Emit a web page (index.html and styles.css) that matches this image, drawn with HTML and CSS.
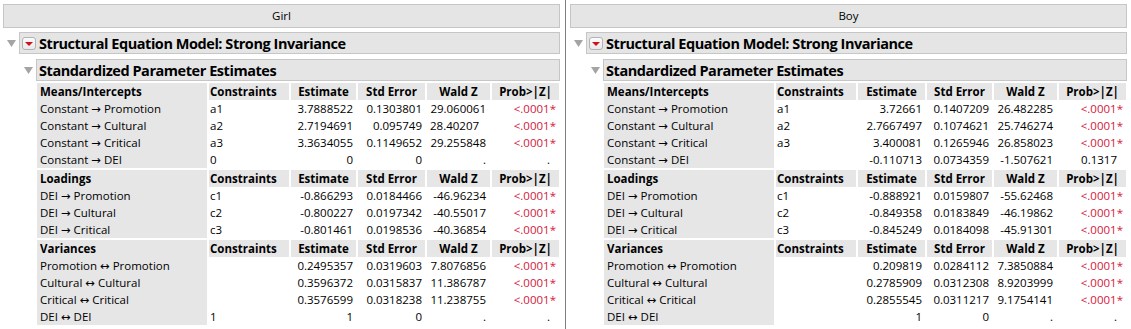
FILE: index.html
```html
<!DOCTYPE html>
<html>
<head>
<meta charset="utf-8">
<link rel="stylesheet" href="styles.css">
</head>
<body>
<div class="page">
  <section class="panel girl">
    <div class="group-title">Girl</div>
    <div class="outline lvl1">
      <span class="disclose"><svg width="9" height="7" viewBox="0 0 9 7"><path d="M0 0H9L4.5 7Z" fill="#a4a4a4"/></svg></span>
      <div class="ohead">
        <span class="menu-btn"><svg width="12" height="11" viewBox="0 0 12 11"><path d="M2 4H10L6 8Z" fill="#d0101e"/></svg></span>
        <span class="otitle">Structural Equation Model: Strong Invariance</span>
      </div>
    </div>
    <div class="outline lvl2">
      <span class="disclose"><svg width="9" height="7" viewBox="0 0 9 7"><path d="M0 0H9L4.5 7Z" fill="#a4a4a4"/></svg></span>
      <div class="ohead"><span class="otitle">Standardized Parameter Estimates</span></div>
    </div>
    <div class="est">
      <div class="grp">
        <div class="c h lab">Means/Intercepts</div><div class="c h con">Constraints</div><div class="c h ctr">Estimate</div><div class="c h ctr">Std Error</div><div class="c h ctr">Wald Z</div><div class="c h ctr">Prob&gt;|Z|</div>
        <div class="c lab">Constant → Promotion</div><div class="c con">a1</div><div class="c num">3.7888522</div><div class="c num">0.1303801</div><div class="c num wz">29.060061</div><div class="c num p">&lt;.0001*</div>
        <div class="c lab">Constant → Cultural</div><div class="c con">a2</div><div class="c num">2.7194691</div><div class="c num">0.095749</div><div class="c num wz d1">28.40207</div><div class="c num p">&lt;.0001*</div>
        <div class="c lab">Constant → Critical</div><div class="c con">a3</div><div class="c num">3.3634055</div><div class="c num">0.1149652</div><div class="c num wz">29.255848</div><div class="c num p">&lt;.0001*</div>
        <div class="c lab">Constant → DEI</div><div class="c con">0</div><div class="c num">0</div><div class="c num">0</div><div class="c num wz">.</div><div class="c num ns">.</div>
      </div>
      <div class="grp">
        <div class="c h lab">Loadings</div><div class="c h con">Constraints</div><div class="c h ctr">Estimate</div><div class="c h ctr">Std Error</div><div class="c h ctr">Wald Z</div><div class="c h ctr">Prob&gt;|Z|</div>
        <div class="c lab">DEI → Promotion</div><div class="c con">c1</div><div class="c num">-0.866293</div><div class="c num">0.0184466</div><div class="c num wz">-46.96234</div><div class="c num p">&lt;.0001*</div>
        <div class="c lab">DEI → Cultural</div><div class="c con">c2</div><div class="c num">-0.800227</div><div class="c num">0.0197342</div><div class="c num wz">-40.55017</div><div class="c num p">&lt;.0001*</div>
        <div class="c lab">DEI → Critical</div><div class="c con">c3</div><div class="c num">-0.801461</div><div class="c num">0.0198536</div><div class="c num wz">-40.36854</div><div class="c num p">&lt;.0001*</div>
      </div>
      <div class="grp">
        <div class="c h lab">Variances</div><div class="c h con">Constraints</div><div class="c h ctr">Estimate</div><div class="c h ctr">Std Error</div><div class="c h ctr">Wald Z</div><div class="c h ctr">Prob&gt;|Z|</div>
        <div class="c lab">Promotion ↔ Promotion</div><div class="c con"></div><div class="c num">0.2495357</div><div class="c num">0.0319603</div><div class="c num wz">7.8076856</div><div class="c num p">&lt;.0001*</div>
        <div class="c lab">Cultural ↔ Cultural</div><div class="c con"></div><div class="c num">0.3596372</div><div class="c num">0.0315837</div><div class="c num wz">11.386787</div><div class="c num p">&lt;.0001*</div>
        <div class="c lab">Critical ↔ Critical</div><div class="c con"></div><div class="c num">0.3576599</div><div class="c num">0.0318238</div><div class="c num wz">11.238755</div><div class="c num p">&lt;.0001*</div>
        <div class="c lab">DEI ↔ DEI</div><div class="c con">1</div><div class="c num">1</div><div class="c num">0</div><div class="c num wz">.</div><div class="c num ns">.</div>
      </div>
    </div>
  </section>
  <div class="divider"></div>
  <section class="panel boy">
    <div class="group-title">Boy</div>
    <div class="outline lvl1">
      <span class="disclose"><svg width="9" height="7" viewBox="0 0 9 7"><path d="M0 0H9L4.5 7Z" fill="#a4a4a4"/></svg></span>
      <div class="ohead">
        <span class="menu-btn"><svg width="12" height="11" viewBox="0 0 12 11"><path d="M2 4H10L6 8Z" fill="#d0101e"/></svg></span>
        <span class="otitle">Structural Equation Model: Strong Invariance</span>
      </div>
    </div>
    <div class="outline lvl2">
      <span class="disclose"><svg width="9" height="7" viewBox="0 0 9 7"><path d="M0 0H9L4.5 7Z" fill="#a4a4a4"/></svg></span>
      <div class="ohead"><span class="otitle">Standardized Parameter Estimates</span></div>
    </div>
    <div class="est">
      <div class="grp">
        <div class="c h lab">Means/Intercepts</div><div class="c h con">Constraints</div><div class="c h ctr">Estimate</div><div class="c h ctr">Std Error</div><div class="c h ctr">Wald Z</div><div class="c h ctr">Prob&gt;|Z|</div>
        <div class="c lab">Constant → Promotion</div><div class="c con">a1</div><div class="c num">3.72661</div><div class="c num">0.1407209</div><div class="c num wz">26.482285</div><div class="c num p">&lt;.0001*</div>
        <div class="c lab">Constant → Cultural</div><div class="c con">a2</div><div class="c num">2.7667497</div><div class="c num">0.1074621</div><div class="c num wz">25.746274</div><div class="c num p">&lt;.0001*</div>
        <div class="c lab">Constant → Critical</div><div class="c con">a3</div><div class="c num">3.400081</div><div class="c num">0.1265946</div><div class="c num wz">26.858023</div><div class="c num p">&lt;.0001*</div>
        <div class="c lab">Constant → DEI</div><div class="c con"></div><div class="c num">-0.110713</div><div class="c num">0.0734359</div><div class="c num wz">-1.507621</div><div class="c num ns">0.1317</div>
      </div>
      <div class="grp">
        <div class="c h lab">Loadings</div><div class="c h con">Constraints</div><div class="c h ctr">Estimate</div><div class="c h ctr">Std Error</div><div class="c h ctr">Wald Z</div><div class="c h ctr">Prob&gt;|Z|</div>
        <div class="c lab">DEI → Promotion</div><div class="c con">c1</div><div class="c num">-0.888921</div><div class="c num">0.0159807</div><div class="c num wz">-55.62468</div><div class="c num p">&lt;.0001*</div>
        <div class="c lab">DEI → Cultural</div><div class="c con">c2</div><div class="c num">-0.849358</div><div class="c num">0.0183849</div><div class="c num wz">-46.19862</div><div class="c num p">&lt;.0001*</div>
        <div class="c lab">DEI → Critical</div><div class="c con">c3</div><div class="c num">-0.845249</div><div class="c num">0.0184098</div><div class="c num wz">-45.91301</div><div class="c num p">&lt;.0001*</div>
      </div>
      <div class="grp">
        <div class="c h lab">Variances</div><div class="c h con">Constraints</div><div class="c h ctr">Estimate</div><div class="c h ctr">Std Error</div><div class="c h ctr">Wald Z</div><div class="c h ctr">Prob&gt;|Z|</div>
        <div class="c lab">Promotion ↔ Promotion</div><div class="c con"></div><div class="c num">0.209819</div><div class="c num">0.0284112</div><div class="c num wz">7.3850884</div><div class="c num p">&lt;.0001*</div>
        <div class="c lab">Cultural ↔ Cultural</div><div class="c con"></div><div class="c num">0.2785909</div><div class="c num">0.0312308</div><div class="c num wz">8.9203999</div><div class="c num p">&lt;.0001*</div>
        <div class="c lab">Critical ↔ Critical</div><div class="c con"></div><div class="c num">0.2855545</div><div class="c num">0.0311217</div><div class="c num wz">9.1754141</div><div class="c num p">&lt;.0001*</div>
        <div class="c lab">DEI ↔ DEI</div><div class="c con"></div><div class="c num">1</div><div class="c num">0</div><div class="c num wz">.</div><div class="c num ns">.</div>
      </div>
    </div>
  </section>
</div>
</body>
</html>
```
FILE: styles.css
```css
* { box-sizing: border-box; }
html, body { margin: 0; padding: 0; background: #fff; }
body {
  font-family: "Open Sans", "Noto Sans", "DejaVu Sans", sans-serif;
  font-size: 11.5px;
  color: #000;
}
.page {
  display: flex;
  padding-left: 3px;
  height: 329px;
  overflow: hidden;
}
.panel {
  width: 557px;
  flex: none;
  padding-top: 4px;
}
.divider {
  width: 1px;
  margin: 0 4px 0 5px;
  background: #7d7d7d;
  flex: none;
}
.group-title {
  height: 24px;
  border: 1px solid #c6c6c6;
  background: #e5e5e5;
  text-align: center;
  line-height: 22px;
  font-size: 11.5px;
}
.outline {
  display: flex;
  align-items: center;
}
.lvl1 { margin-top: 4px; }
.lvl2 { margin-top: 5px; padding-left: 17px; }
.disclose {
  width: 16px;
  flex: none;
  display: flex;
  padding-left: 4px;
}
.disclose svg { display: block; }
.ohead {
  flex: 1;
  height: 22px;
  border: 1px solid #c6c6c6;
  background: #e5e5e5;
  display: flex;
  align-items: center;
  padding-left: 2px;
}
.menu-btn {
  width: 14px;
  height: 13px;
  border: 1px solid #b3b3b3;
  border-radius: 3px;
  background: linear-gradient(#fbfbfb, #e9e9e9);
  margin-right: 3px;
  display: flex;
  align-items: center;
  justify-content: center;
  flex: none;
}
.menu-btn svg { display: block; }
.otitle {
  font-weight: bold;
  font-size: 14.5px;
  white-space: nowrap;
  letter-spacing: -0.45px;
}
.est {
  margin: 2px 0 0 34px;
  width: 522px;
}
.grp {
  display: grid;
}
.girl .grp { grid-template-columns: 170px 82px 67px 69px 65px 69px; }
.boy .grp { grid-template-columns: 170px 82px 69px 67px 65px 69px; }
.grp + .grp { margin-top: 2px; }
.c {
  height: 17px;
  line-height: 17px;
  white-space: nowrap;
  overflow: hidden;
  border-left: 2px solid #fff;
  padding: 0 3px;
}
.c.lab {
  border-left: 0;
  background: #e6e6e6;
  padding-left: 3px;
}
.c.h {
  background: #e6e6e6;
  font-weight: bold;
}
.c.con { padding-left: 1px; }
.c.ctr { text-align: center; padding: 0; }
.c.num { text-align: right; }
.c.wz { padding-right: 4px; }
.c.wz.d1 { padding-right: 11px; }
.c.p { color: #d3173c; padding-right: 3px; }
.c.ns { padding-right: 9px; }
```
